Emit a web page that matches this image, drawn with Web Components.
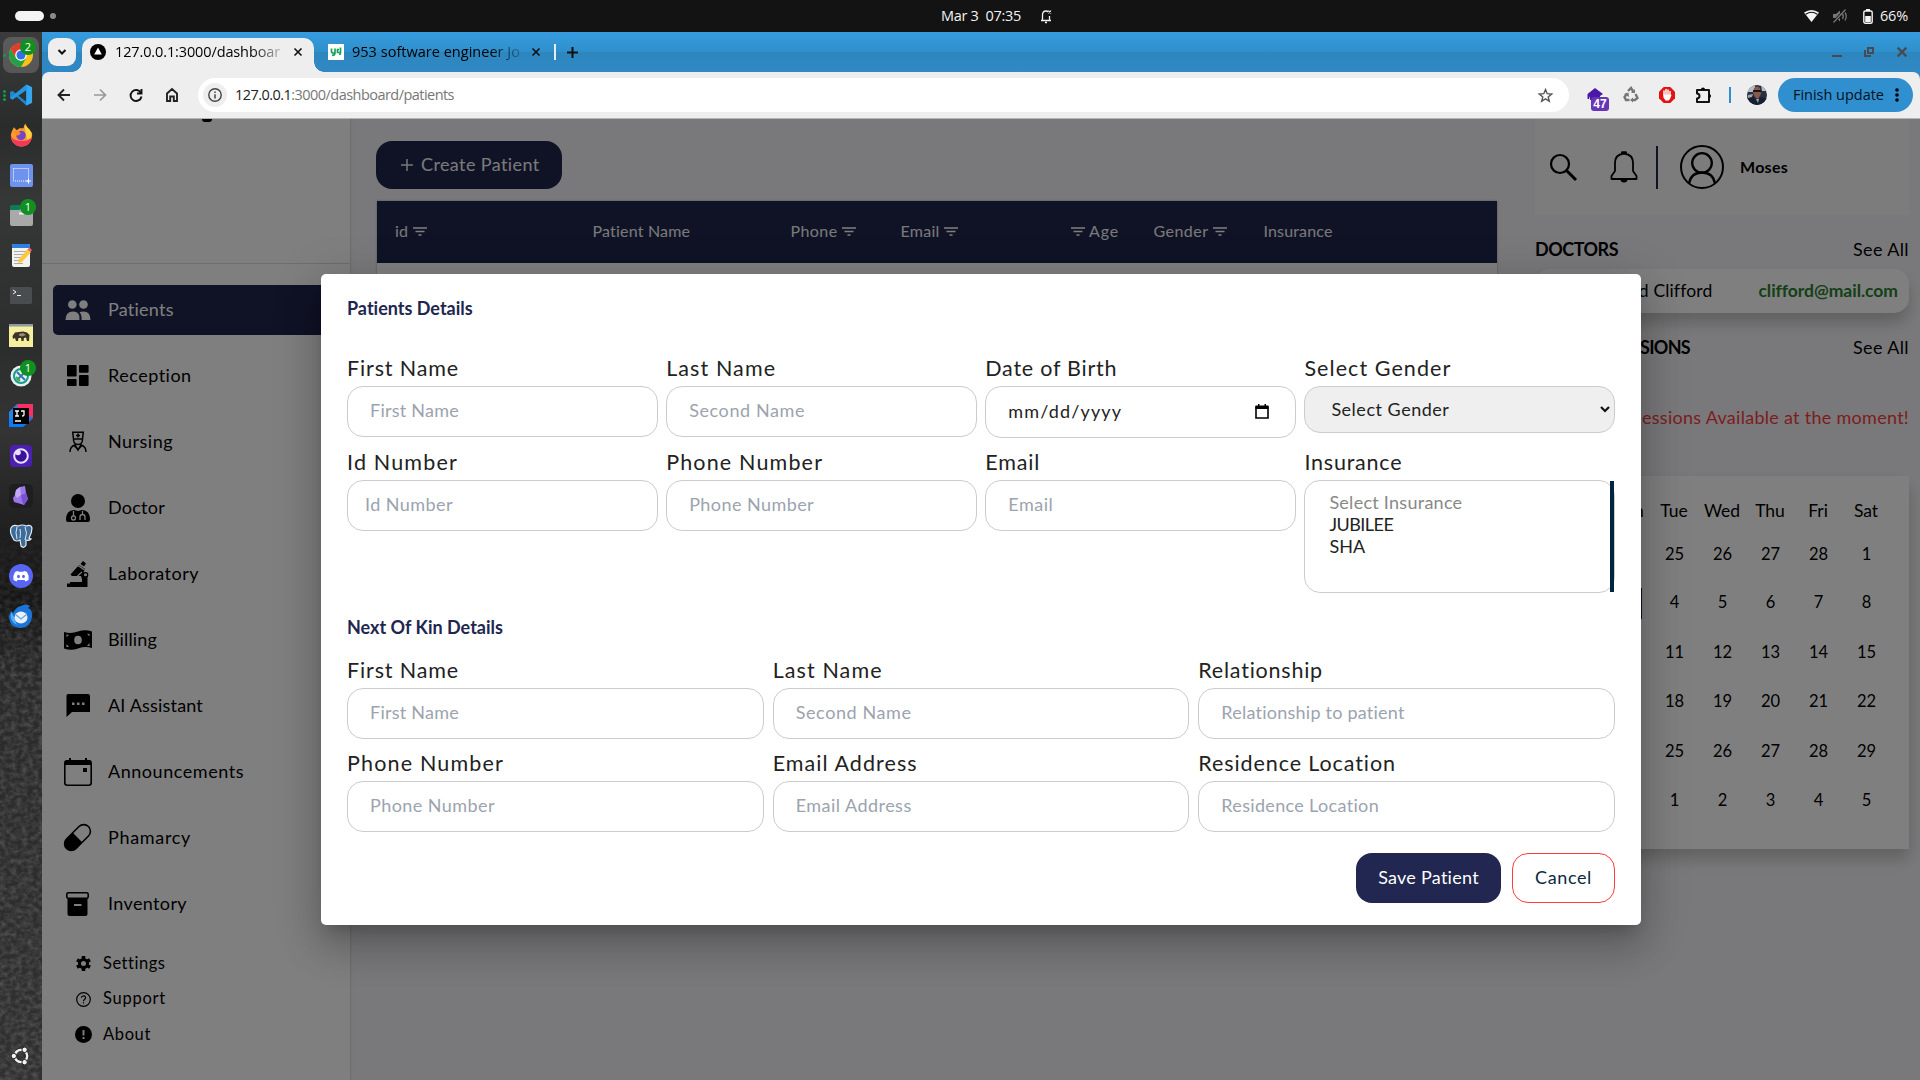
<!DOCTYPE html>
<html lang="en">
<head>
<meta charset="utf-8">
<title>Patients</title>
<style>
html,body{margin:0;height:100%;overflow:hidden;background:#131313}
body{font-family:Lato,"Open Sans",sans-serif;font-size:18px;color:#000}
</style>
</head>
<body>
<desktop-shell></desktop-shell>
<script>
const define = (name, css, html) => customElements.define(name, class extends HTMLElement {
  constructor() {
    super();
    this.attachShadow({ mode: 'open' });
  }
  connectedCallback() {
    const t = document.createElement('template');
    t.innerHTML = `<style>:host{display:block;box-sizing:border-box}*{box-sizing:border-box}svg{display:block;flex:none;overflow:visible}${css}</style>` + (typeof html === 'function' ? html(this) : html);
    this.shadowRoot.replaceChildren(t.content.cloneNode(true));
  }
});
const svg = (w, h, vb, body, extra = '') => `<svg width="${w}" height="${h}" viewBox="${vb}" ${extra}>${body}</svg>`;

/* ---------- dock ---------- */
const badge = n => `<span class="badge">${n}</span>`;
const dockIcons = [
  `<div class="cell on">${svg(24,24,'0 0 24 24','<circle cx="12" cy="12" r="12" fill="#fbc116"/><path d="M12 12 1.6 6A12 12 0 0 1 22.400 6Z" fill="#e33b2e"/><path d="M12 6H22.4A12 12 0 0 0 1.600 6L6.800 15Z" fill="#e33b2e"/><path d="M1.600 6 6.800 15 12 18 17.200 15 12 24A12 12 0 0 1 1.600 6Z" fill="#24a148"/><circle cx="12" cy="12" r="5.800" fill="#fff"/><circle cx="12" cy="12" r="4.500" fill="#2f72e2"/>')}${badge(2)}<i class="d1"></i></div>`,
  `<div class="cell">${svg(23,24,'0 0 24 24','<path d="M17 1 23 4V20L17 23 6.500 13.500 2.500 16.500 0 15.200V8.800L2.500 7.500 17 19Z" fill="#1b86d0"/><path d="M0 15.200 17 1V7L2.500 17Z" fill="#2796e0"/><path d="M17 1 23 4V20L17 23Z" fill="#35a7f0"/>')}<i class="d2"></i></div>`,
  `<div class="cell">${svg(23,24,'0 0 24 24','<path d="M2 8 4 4 7 7 10 5 14 5 16 0 19 6 23 10C24 18 19 24 12 24S0 18 1 11Z" fill="#ff9a2a"/><path d="M1 12C2 17 7 18 12 18S20 18 23 13C22 20 18 24 12 24S1 19 1 12Z" fill="#f5365c"/><path d="M15 1C20 6 24 8 22 15L18 17 16 8Z" fill="#ffd43b"/><circle cx="11.500" cy="12.500" r="5" fill="#7446c9"/><path d="M4 8 10 8 11 11 7 13Z" fill="#ff8a1e"/>')}</div>`,
  `<div class="cell">${svg(23,23,'0 0 23 23','<rect width="23" height="23" rx="2" fill="#6d92f0"/><rect x="3.500" y="4.500" width="15" height="12.500" fill="none" stroke="#fff" stroke-dasharray="1 1"/><path d="M18.500 14.500v5M16 17h5" stroke="#fff"/>')}</div>`,
  `<div class="cell">${svg(23,22,'0 0 23 22','<rect y="1" width="14" height="9" rx="2" fill="#0d7a5c"/><path d="M0 6 9 6 12 4H23V20Q23 22 21 22H2Q0 22 0 20Z" fill="#a9a9a9"/><path d="M9 8.500h5v2H9z" fill="#eee"/>')}${badge(1)}</div>`,
  `<div class="cell">${svg(22,23,'0 0 22 23','<rect x="2" width="18" height="23" rx="2" fill="#f2f2ee"/><path d="M2 4V2Q2 0 4 0H18Q20 0 20 2V4Z" fill="#2f7fe0"/><path d="M4 7.500h12M4 10.500h10M4 13.500h8M4 16.500h6M4 19.500h9" stroke="#aaa"/><path d="M8 19 9 15 18 5 21 8 12 18Z" fill="#ffc83a"/><path d="M17.500 5.500 19.500 3.500 22 6 20.500 8Z" fill="#ee5d62"/>')}</div>`,
  `<div class="cell">${svg(24,19,'0 0 24 19','<rect x=".5" y=".5" width="23" height="18" rx="2" fill="#4a4d50" stroke="#2e3032"/><path d="M4 4 7 6 4 8M8 9.500h4" fill="none" stroke="#eee"/>')}</div>`,
  `<div class="cell">${svg(24,23,'0 0 24 23','<rect width="24" height="23" fill="#f6ef9d"/><rect width="24" height="2.500" fill="#8c9aa6"/><path d="M3.500 12 6 8.500 10 8 14 7.500 18 8.500 20.500 11 20 17 18 17 17 13.500 15 14 14.500 17 12.500 17 12 14 9.500 14 9 17 7 17 6 14 4 15Z" fill="#3b3428"/><path d="M10 10 14 9 17 11 13 12.500 10 11.500Z" fill="#988c72"/>')}</div>`,
  `<div class="cell">${svg(22,22,'0 0 22 22','<circle cx="11" cy="11" r="10.500" fill="#e9eeee"/><circle cx="11" cy="11" r="7" fill="none" stroke="#189b8b" stroke-width="2"/><path d="M7 7 15 15M7 15 11 11 15 7" stroke="#3574b4" stroke-width="2"/><path d="M6 12l4 4" stroke="#32b34a" stroke-width="2"/>')}${badge(1)}</div>`,
  `<div class="cell">${svg(24,24,'0 0 24 24','<path d="M0 8 8 0 14 12 0 22Z" fill="#2b7fe8"/><path d="M8 0H24V14L18 20 10 10Z" fill="#fb2f68"/><path d="M0 16 0 23H14L20 18 24 13 10 12Z" fill="#087cfa"/><rect x="4" y="4" width="16" height="16"/><path d="M6 7h4M8 7v5M6 12h4M12 7h3v4q0 1-2 1M6 17h6" stroke="#fff" stroke-width="1.300" fill="none"/>')}</div>`,
  `<div class="cell">${svg(22,22,'0 0 22 22','<rect width="22" height="22" rx="4" fill="#4b1fb4"/><circle cx="11" cy="11" r="6.800" fill="#3a109c" stroke="#e8e2fb" stroke-width="2"/><circle cx="8" cy="7.500" r="2.800" fill="#e8e2fb"/>')}</div>`,
  `<div class="cell">${svg(24,24,'0 0 24 24','<rect width="24" height="24" rx="5" fill="#1e1e20"/><path d="M11 3 16 2 17 9 19 15 15 21 12 20 5 18 4 14 6 11 7 6Z" fill="#9b78ea"/><path d="M11 3 12 11 8 14 6 11 7 6Z" fill="#c3a8f6"/><path d="M12 11 17 9 19 15 15 21 13 17Z" fill="#7a50d4"/>')}</div>`,
  `<div class="cell">${svg(24,24,'0 0 24 24','<path d="M2 4Q4 0 9 2 14 0 17 2 22 0 23 4 23 9 20 14L22 15Q20 17 17 16V21Q15 25 12 22L11 16Q8 18 5 16 0 8 2 4Z" fill="#3c6d9a" stroke="#e6edf3" stroke-width="1.200"/><path d="M8 3Q6 8 8 15M16 3Q19 9 16 16M11 5Q12 9 11 14" fill="none" stroke="#dfe8ef"/>')}</div>`,
  `<div class="cell">${svg(24,24,'0 0 24 24','<circle cx="12" cy="12" r="12" fill="#5865f2"/><path d="M8.500 7 10 7.800H14L15.500 7 18 8Q20.500 12 19.500 16L16.500 17.500 15.500 16H8.500L7.500 17.500 4.500 16Q3.500 12 6 8Z" fill="#fff"/><ellipse cx="9.500" cy="12.500" rx="1.400" ry="1.700" fill="#5865f2"/><ellipse cx="14.500" cy="12.500" rx="1.400" ry="1.700" fill="#5865f2"/>')}</div>`,
  `<div class="cell">${svg(24,24,'0 0 24 24','<path d="M12 2Q17-1 21 2L19 4Q24 6 23 13 21 24 12 24 1 24 0 13L2 7 4 9Q7 3 12 2Z" fill="#1b74d8"/><path d="M2 8Q0 17 8 21L5 13Z" fill="#52b1f3"/><ellipse cx="12" cy="13.500" rx="6.500" ry="6" fill="#e9f1fb"/><path d="M6.500 10.500 12 15 17.500 10.500" fill="none" stroke="#6fa5dd" stroke-width="1.300"/>')}</div>`
];
define('app-dock', `
:host{width:42px;background:linear-gradient(#3b3b3b,#2a2c2c 9%,#363838 16%,#2c2d2d 30%,#343434 38%,#1e1e1e 48%,#161616 54%,#2a2a2a 62%,#303030);position:relative;overflow:hidden;display:flex;flex-direction:column;align-items:center}
.tex{position:absolute;left:0;top:0;opacity:.24;z-index:0;-webkit-mask:linear-gradient(transparent 480px,#000 620px)}
.cell{position:relative;width:42px;height:40.070px;flex:none;display:flex;align-items:center;justify-content:center}
.first{height:3px}
.on::before{content:"";position:absolute;left:3px;top:2px;width:36px;height:36px;border-radius:8px;background:#ffffff2b}
.cell svg{position:relative}
.badge{position:absolute;left:20px;top:4px;width:16px;height:16px;border-radius:50%;background:#109021;color:#fff;font:11px/16px "Open Sans",sans-serif;text-align:center}
i{position:absolute;left:3px;width:3px;height:3px;border-radius:50%;background:#109a56;top:19px}
.d2{box-shadow:0 -4px #109a56,0 4px #109a56}
.end{margin-top:auto;margin-bottom:14px;position:relative}
`, `${svg(42,1048,'0 0 42 1048','<filter id="n" x="0" y="0" width="100%" height="100%"><feTurbulence type="fractalNoise" baseFrequency=".18 .22" numOctaves="3" seed="4"/><feColorMatrix values="0 0 0 0 .55  0 0 0 0 .55  0 0 0 0 .55  1.800 0 0 0 -.6"/></filter><rect y="480" width="42" height="568" filter="url(#n)"/>','class="tex"')}
<div class="first"></div>${dockIcons.join('')}<div class="end">${svg(20,20,'0 0 20 20','<circle cx="10" cy="10" r="6.200" fill="none" stroke="#f4f4f4" stroke-width="2.200"/><g fill="#f4f4f4" stroke="#222" stroke-width="1"><circle cx="2.800" cy="10" r="2.700"/><circle cx="13.600" cy="3.800" r="2.700"/><circle cx="13.600" cy="16.200" r="2.700"/></g>')}</div>`);

/* ---------- system bar ---------- */
define('system-bar', `
:host{height:32px;background:#131313;color:#f2f2f2;display:grid;grid-template-columns:1fr auto 1fr;align-items:center;font:14.500px "Open Sans","Noto Sans",sans-serif}
.l{display:flex;align-items:center;gap:6px;padding-left:15px}.l b{width:29px;height:10px;border-radius:5px;background:#f4f4f4}.l i{width:6px;height:6px;border-radius:50%;background:#8b8b8b}
.c{display:flex;align-items:center;width:114px;gap:19px;margin-left:76px}
.r{display:flex;justify-content:flex-end;align-items:center;padding-right:12px}
`, `<div class="l"><b></b><i></i></div>
<div class="c"><fit-text w="80">Mar 3&nbsp; 07:35</fit-text>${svg(12,15,'0 0 12 15','<path d="M1 11.500h10M2.500 11V6Q2.500 2 6 2q1.500 0 2.500 1M9.500 7v4M5 13.500h2" stroke="#f2f2f2" stroke-width="1.300" fill="none"/><path d="M8.500 1.500 11 4.500M11 1.500 8.500 4.500" stroke="#f2f2f2" stroke-width="1.100"/>')}</div>
<div class="r">${svg(15,12,'0 0 15 12','<path d="M0 2.500Q7.500-2.500 15 2.500L7.500 12Z" fill="#f4f4f4"/><path d="M1.700 4.200Q7.500.2 13.300 4.200" stroke="#131313" fill="none" stroke-width="1.100"/>')}
${svg(14,14,'0 0 14 14','<path d="M0 5H3L7 1.500V12.500L3 9H0Z" fill="#777"/><path d="M.5 13.500 12.500.5" stroke="#131313" stroke-width="3"/><path d="M.5 13.500 12.500.5M9.500 5Q11 7 9.500 10M12 3.500Q14.500 7 12 11.500" fill="none" stroke="#777" stroke-width="1.300"/>','style="margin:0 16px 0 14px"')}
${svg(10,15,'0 0 10 15','<rect x=".8" y="2" width="8.400" height="12.200" rx="1.500" fill="none" stroke="#f4f4f4" stroke-width="1.400"/><path d="M3 0h4v2H3zM2.200 7h5.600v6H2.200z" fill="#f4f4f4"/>','style="margin-right:7px"')}<fit-text w="28">66%</fit-text></div>`);

/* ---------- browser chrome ---------- */
const X = (c, s = 8, w = 1.6) => svg(s, s, '0 0 8 8', `<path d="M.5.5 7.500 7.500M7.500.5.5 7.500" stroke="${c}" stroke-width="${w}"/>`);
define('tab-strip', `
:host{height:40px;background:linear-gradient(#369cdf,#2f8fcb 50%,#2e86bf 50%,#3089c4);display:flex;align-items:flex-start;padding:6px 0 0 6px;font:14.500px "Open Sans",sans-serif}
.dd{width:28px;height:28px;border-radius:9px;background:#eee;display:flex;align-items:center;justify-content:center;margin-right:6px}
.tab{width:232px;height:34px;background:#eee;border-radius:10px 10px 0 0;display:flex;align-items:center;padding:0 12px 6px 8px;position:relative}
.tab::before,.tab::after{content:"";position:absolute;bottom:0;width:10px;height:10px;left:-10px;background:radial-gradient(circle at 0 0,transparent 9.500px,#eee 10px)}
.tab::after{left:auto;right:-10px;background:radial-gradient(circle at 100% 0,transparent 9.500px,#eee 10px)}
.tx{margin:0 0 0 9px;-webkit-mask:linear-gradient(90deg,#000 82%,#0003 100%)}
.t2{height:28px;display:flex;align-items:center;padding-left:14px}
.win{margin-left:auto;display:flex;align-items:center;height:28px;padding-right:13px}
`, `<div class="dd">${svg(8,6,'0 0 8 6','<path d="M.5 1 4 4.500 7.500 1" fill="none" stroke="#111" stroke-width="2"/>')}</div>
<div class="tab">${svg(16,16,'0 0 16 16','<circle cx="8" cy="8" r="8"/><path d="M8 3.500 11.800 10.500H4.200Z" fill="#fff"/>')}<div class="tx" style="width:166px"><fit-text w="165">127.0.0.1:3000/dashboar</fit-text></div><span style="margin-left:auto">${X('#111')}</span></div>
<div class="t2">${svg(16,16,'0 0 16 16','<rect width="16" height="16" fill="#fff"/><path d="M3.500 4.500v3q0 1.500 2 1.500h1.500M7 4.500v4q0 3-3 3M9 5.500h2M12.500 3.500v5.500q0 1.500-1.500 1.500M9.500 5v3.500h2" fill="none" stroke="#13a25a" stroke-width="1.700"/>')}<div class="tx" style="width:169px;margin-left:8px"><fit-text w="168">953 software engineer Jo</fit-text></div><span style="margin-left:11px">${X('#111')}</span><i style="width:2px;height:16px;background:#e5eef5;margin:0 11px 0 14px"></i>${svg(11,11,'0 0 11 11','<path d="M5.500 0V11M0 5.500H11" stroke="#111" stroke-width="2"/>')}</div>
<div class="win">${svg(10,10,'0 0 10 10','<path d="M0 9h10" stroke="#454b50" stroke-width="2"/>')}<span style="margin:0 23px 0 22px">${svg(10,10,'0 0 10 10','<path d="M1 3V9H7M4 1H9V6H4Z" fill="none" stroke="#454b50" stroke-width="2"/>')}</span>${X('#454b50',10,1.7)}</div>`);

define('tool-bar', `
:host{height:47px;background:#eee;border-bottom:1px solid #b3b5b5;border-radius:7px 7px 0 0;display:flex;align-items:center;padding-left:14px;font:14.500px "Open Sans",sans-serif;color:#222}
.nav{display:flex;gap:20px;width:142px;align-items:center}
.url{width:1371px;height:34px;border-radius:17px;background:#fff;display:flex;align-items:center;padding:0 16px 0 5px;gap:8px}
.inf{width:24px;height:24px;border-radius:50%;background:#eee;display:grid;place-items:center}
.url em{font-style:normal;color:#777}
.star{margin-left:auto}
.ext{display:flex;align-items:center;height:100%;padding-left:18px}
.hat{position:relative}
.hat b{position:absolute;left:4px;top:9px;width:18px;height:14px;border-radius:3px;background:#6635b8;color:#fff;font:bold 12px/14px "Liberation Sans",sans-serif;text-align:center}
.fin{width:135px;height:34px;border-radius:17px;background:#2f8fcf;display:flex;align-items:center;padding-left:15px;margin-left:11px;gap:11px;color:#07121b}
`, `<div class="nav">${[
 '<path d="M14 8H3M8 2.500 2.500 8 8 13.500" fill="none" stroke="#222" stroke-width="1.900"/>',
 '<path d="M2 8H13M8 2.500 13.500 8 8 13.500" fill="none" stroke="#999" stroke-width="1.700"/>',
 '<path d="M13 6A5.500 5.500 0 1 0 13.500 9.500M13.500 2V6.500H9" fill="none" stroke="#111" stroke-width="1.900"/>',
 '<path d="M3 14V6.500L8 2 13 6.500V14H9.800V9.500H6.200V14Z" fill="none" stroke="#222" stroke-width="1.900"/>'].map(p => svg(16,16,'0 0 16 16',p)).join('')}</div>
<div class="url"><div class="inf">${svg(14,14,'0 0 14 14','<circle cx="7" cy="7" r="6.200" fill="none" stroke="#444" stroke-width="1.400"/><path d="M7 6.200V10.500M7 3.500V5" stroke="#444" stroke-width="1.500"/>')}</div><fit-text w="219">127.0.0.1<em>:3000/dashboard/patients</em></fit-text>
<span class="star">${svg(15,15,'0 0 15 15','<path d="M7.500 1.500 9.200 5.700 13.700 6 10.200 8.900 11.300 13.300 7.500 10.900 3.700 13.300 4.800 8.900 1.300 6 5.800 5.700Z" fill="none" stroke="#555" stroke-width="1.400"/>')}</span></div>
<div class="ext"><span class="hat">${svg(16,14,'0 0 16 14','<path d="M8 0 16 6 13 8V12H3V8L2 11H.5V6Z" fill="#4a17a8"/>')}<b>47</b></span>
<span style="margin-left:20px">${svg(16,16,'0 0 16 16','<path d="M5 4 8 1 10.500 5M12.500 7 14.500 11 12 13H9M6.500 13H3L1.500 10 4 6.500" fill="none" stroke="#777" stroke-width="2.400"/><path d="M8 6h4V2ZM10 10.500V15.500L7 13ZM1 7 5.500 5.500 6 10Z" fill="#777"/>')}</span>
<span style="margin-left:20px">${svg(16,16,'0 0 16 16','<path d="M4.700 0H11.300L16 4.700V11.300L11.300 16H4.700L0 11.300V4.700Z" fill="#e61212"/><path d="M5 8V4M7 7.500V2.500M9 7.500V3M11 8V4.500" stroke="#fff" stroke-width="1.500" stroke-linecap="round"/><path d="M4.300 7.500H11.800L12.500 8 11 12 9.500 13.500H6.500L4.500 10.500Z" fill="#fff"/>')}</span>
<span style="margin-left:20px">${svg(17,17,'0 0 17 17','<path d="M2 3H14V7 11V15H2V11.500A2.500 2.500 0 0 0 2 6.500Z" fill="none" stroke="#111" stroke-width="2" stroke-linejoin="round"/><path d="M6 2.500A2 2 0 0 1 10 2.500ZM14 7A2 2 0 0 1 14 11Z"/>')}</span>
<i style="width:2px;height:16px;background:#2f8fcf;margin:0 16px 0 17px"></i>
${svg(20,20,'0 0 20 20','<clipPath id="c"><circle cx="10" cy="10" r="10"/></clipPath><g clip-path="url(#c)"><path d="M0 0h20v20H0z" fill="#27303f"/><path d="M0 0H8V7H0zM14 0h6v6h-5z" fill="#b9bec6"/><path d="M7 3Q10 0 13 3L14 9 11 14 8 12 6 8Z" fill="#8a5a48"/><path d="M6 5h8v2H6z" fill="#17171c"/><path d="M0 12 6 11 10 16 14 12 20 14V20H0Z" fill="#18202f"/><path d="M1 10 6 9 5 12 1 13ZM9 14l3 0-1 4Z" fill="#9aa3b1"/></g>')}
<div class="fin"><fit-text w="91">Finish update</fit-text>${svg(4,14,'0 0 4 14','<circle cx="2" cy="2" r="1.800"/><circle cx="2" cy="7" r="1.800"/><circle cx="2" cy="12" r="1.800"/>')}</div></div>`);

/* ---------- sidebar ---------- */
const icons = {
  patients: svg(26,20,'0 0 26 20','<circle cx="7.300" cy="4.500" r="4.300"/><circle cx="18.500" cy="4.500" r="4.300"/><path d="M.5 20Q.5 11.500 8 11.500T14.500 20ZM14.500 12Q25.500 9.500 25.500 20H16.500Q17 15 14.500 12Z"/>'),
  reception: svg(22,21,'0 0 22 21','<rect x="0" width="9.600" height="11.500" rx="1"/><rect x="12" width="9.600" height="7.700" rx="1"/><rect y="14" width="9.600" height="7" rx="1"/><rect x="12" y="10" width="9.600" height="11" rx="1"/>'),
  nursing: svg(18,21,'0 0 18 21','<path d="M4.500 8 3.700 1.200H14.300L13.500 8ZM4.500 8V9Q5 13.500 9 13.500T13.500 9V8M1 21Q1 15.500 6 14L9 19 12 14Q17 15.500 17 21M5.500 15 9 18.500 12.500 15" fill="none" stroke="#000" stroke-width="1.500"/><path d="M9 2.500v4M7 4.500h4" stroke="#000" stroke-width="1.500"/>'),
  doctor: svg(24,28,'0 0 24 28','<circle cx="12" cy="7" r="7"/><path d="M0 26Q0 16 8 16L12 17 16 16Q24 16 24 26 24 28 22 28H2Q0 28 0 26Z"/><path d="M7.500 17V22M16.500 17V20.500M14 26V23Q14 20.500 16.500 20.500T19 23V26" fill="none" stroke="#fff" stroke-width="1.300"/><circle cx="7.500" cy="24" r="2" fill="none" stroke="#fff" stroke-width="1.300"/>'),
  laboratory: svg(22,26,'0 0 22 26','<path d="M0 26V22.500H3V21H15V18L14 15 5 15 3.500 13.500 12 4 18 8 16.500 11Q20 12 20.500 15V26Z"/><path d="M13.500 3 16 0 19 2.500 17 5.500Z"/><path d="M11 4.500 17.500 9M3 18H13.500M10.500 15 15 11" stroke="#fff" stroke-width="1.200"/><circle cx="18.500" cy="13.800" r="2.200" fill="#fff" stroke="#000" stroke-width="1.300"/>'),
  billing: svg(28,20,'0 0 28 20','<path d="M0 2Q7 4 14 1.500T28 1.500V18Q21 16 14 18.500T0 18.500Z"/><ellipse cx="14" cy="10" rx="3.800" ry="4.300" fill="#fff"/><path d="M2.500 7V4.500L5 5ZM25.500 4V6.500L23 3.700ZM2.500 14V17H5ZM25.500 13V16H23Z" fill="#fff"/>'),
  ai: svg(24,24,'0 0 24 24','<path d="M2 0H22Q24 0 24 2V18H6L.5 23V2Q.5 0 2 0Z"/><path d="M6 8.500h2.500v2.500H6zM11 8.500h2.500v2.500H11zM16 8.500h2.500v2.500H16z" fill="#fff"/>'),
  announcements: svg(28,28,'0 0 28 28','<rect x=".8" y="2.800" width="26.400" height="24.400" rx="2.500" fill="none" stroke="#000" stroke-width="1.600"/><path d="M1 7V4Q1 2 3 2H25Q27 2 27 4V7ZM5 0h2v3H5zM21 0h2v3h-2zM19 10h4v4h-4z"/>'),
  phamarcy: svg(27,27,'0 0 27 27','<g transform="rotate(-45 13.500 13.500)"><rect x="-2" y="6.800" width="31" height="13.400" rx="6.700" fill="none" stroke="#000" stroke-width="1.600"/><path d="M13.500 6.500H5A7 7 0 0 0 5 20.500H13.500Z"/></g>'),
  inventory: svg(23,24,'0 0 23 24','<rect x=".8" y=".8" width="21.400" height="5.400" rx="1.500" fill="none" stroke="#000" stroke-width="1.600"/><path d="M1.500 6H21.500V22Q21.500 24 19.500 24H3.500Q1.500 24 1.500 22Z"/><path d="M8 12h7.500v2H8z" fill="#fff"/>'),
  settings: svg(15,15,'0 0 15 15','<circle cx="7.500" cy="7.500" r="4" fill="none" stroke="#000" stroke-width="3"/><path d="M7.500 0V3M7.500 12V15M1 3.800 3.500 5.200M11.500 9.800 14 11.200M1 11.200 3.500 9.800M11.500 5.200 14 3.800" stroke="#000" stroke-width="3.600"/>'),
  support: svg(15,15,'0 0 15 15','<circle cx="7.500" cy="7.500" r="6.800" fill="none" stroke="#000" stroke-width="1.200"/><path d="M5.300 5.800Q5.500 3.800 7.500 3.800T9.600 5.700C9.600 7.200 7.500 7.300 7.500 9.200M7.500 10.200V11.500" fill="none" stroke="#000" stroke-width="1.200"/>'),
  about: svg(17,17,'0 0 17 17','<circle cx="8.500" cy="8.500" r="8.500"/><path d="M8.500 4V9.500M8.500 11V13" stroke="#fff" stroke-width="1.900"/>')
};
define('nav-item', `
:host{height:66px;display:flex;align-items:center}
.row{height:50px;flex:1;border-radius:5px;display:flex;align-items:center;padding-left:10px;gap:16px}
.ic{width:29px;display:grid;place-items:center}
:host([active]) .row{background:#20244d;color:#fff}:host([active]) svg{fill:#fff}
:host([small]){height:35.500px;font-size:16.500px}:host([small]) .row{padding-left:16px;gap:5px}
`, el => `<div class="row"><span class="ic">${icons[el.getAttribute('icon')]}</span><fit-text w="${el.getAttribute('w')}">${el.getAttribute('label')}</fit-text></div>`);
const nav = [['patients','Patients',66,'active'],['reception','Reception',84],['nursing','Nursing',65],['doctor','Doctor',57],['laboratory','Laboratory',91],['billing','Billing',49],['ai','AI Assistant',95],['announcements','Announcements',136],['phamarcy','Phamarcy',83],['inventory','Inventory',79],['settings','Settings',62,'small'],['support','Support',63,'small'],['about','About',48,'small']];
define('side-nav', `
:host{width:308px;background:#fff;box-shadow:0 0 3px #0003;position:relative;display:flex;flex-direction:column}
.logo{height:145px;border-bottom:1px solid #ddd;margin-bottom:12.500px;display:flex;padding-left:160px}
.logo i{width:10px;height:3px;background:#000;border-radius:0 0 6px 6px}
nav{padding:0 11px;display:flex;flex-direction:column}
nav nav-item[icon=settings]{margin-top:9.500px}
`, `<div class="logo"><i></i></div><nav>${nav.map(n => `<nav-item icon="${n[0]}" label="${n[1]}" w="${n[2]}" ${n[3] || ''}></nav-item>`).join('')}</nav>`);

/* ---------- main column ---------- */
const filt = svg(14,9,'0 0 14 9','<path d="M0 1H14M2.500 4.500H11.500M5.500 8H8.500" stroke="#fff" stroke-width="1.500"/>');
define('patient-table', `
:host{width:1120px;background:#fff;height:400px;box-shadow:0 0 2px #0005}
.h{height:62px;background:#20244d;color:#f2f2f2;font-size:16px;display:grid;grid-template-columns:197.500px 198px 110px 170px 83px 110px 1fr;align-items:center;padding:0 0 2px 18px}
.h span{display:flex;align-items:center;gap:4.500px}
`, `<div class="h"><span><fit-text w="13">id</fit-text>${filt}</span><span><fit-text w="98">Patient Name</fit-text></span><span><fit-text w="47">Phone</fit-text>${filt}</span><span><fit-text w="39">Email</fit-text>${filt}</span><span>${filt}<fit-text w="30">Age</fit-text></span><span><fit-text w="55">Gender</fit-text>${filt}</span><span><fit-text w="69">Insurance</fit-text></span></div>`);
define('main-view', `
:host{flex:1;padding:22px 0 0 26px;display:flex;flex-direction:column;align-items:flex-start}
.btn{width:186px;height:48px;border-radius:16px;background:#20244d;color:#f5f5f5;display:flex;align-items:center;padding-left:25px;gap:8px;margin-bottom:12px}
patient-table{margin-left:1px}
`, `<div class="btn">${svg(12,12,'0 0 12 12','<path d="M6 0V12M0 6H12" stroke="#eee" stroke-width="1.500"/>')}<fit-text w="119">Create Patient</fit-text></div><patient-table></patient-table>`);

/* ---------- right panel ---------- */
define('mini-calendar', `
:host{height:373px;background:#fff;box-shadow:0 10px 15px #0003;display:grid;grid-template-columns:repeat(7,48px);grid-template-rows:47px 39px 58px 41px 57.500px 42px 57px;justify-content:end;padding:12px 19px 0 0;align-items:center;justify-items:center;font-size:16.500px}
span{padding:0 0 2px 1px}.h{font-size:17.500px;padding-left:0}
.sel{background:#20244d;color:#fff;width:32px;height:31px;display:grid;place-items:center}
`, (() => {
  const rows = [['Sun','Mon','Tue','Wed','Thu','Fri','Sat'],[23,24,25,26,27,28,1],[2,3,4,5,6,7,8],[9,10,11,12,13,14,15],[16,17,18,19,20,21,22],[23,24,25,26,27,28,29],[30,31,1,2,3,4,5]];
  return rows.map((r, i) => r.map((d, j) => `<span class="${i ? '' : 'h'} ${i === 2 && j === 1 ? 'sel' : ''}">${j === 0 || (j === 1 && i) ? '' : d}</span>`).join('')).join('');
})());
define('right-panel', `
:host{width:374px;margin-right:11px;display:flex;flex-direction:column}
.top{height:96px;background:#f8f8f8;display:flex;align-items:center;padding-left:15px}
.hd{display:flex;justify-content:space-between;align-items:center;height:30px}
b{font-weight:700}
.doc{height:44px;border-radius:15px;background:#fff;box-shadow:0 10px 15px #0003;display:flex;align-items:center;justify-content:flex-end;padding-right:11px;gap:46px}
.doc b{color:#2a8030}
.none{height:32px;display:flex;align-items:center;justify-content:flex-end;color:#f83c3c;margin:39px 0 42px}
`, `<div class="top">${svg(27,27,'0 0 27 27','<circle cx="10" cy="10" r="9" fill="none" stroke="#000" stroke-width="2.200"/><path d="M16.500 16.500 26 26" stroke="#000" stroke-width="3"/>')}
${svg(28,32,'0 0 28 32','<path d="M14 2.500Q5 3.500 5 12V20L1.500 25V28H26.500V25L23 20V12Q23 3.500 14 2.500ZM12 3V1.200H16V3" fill="none" stroke="#000" stroke-width="1.800" stroke-linejoin="round"/><path d="M10.500 29H17.500Q17 31.500 14 31.500T10.500 29Z"/>','style="margin:0 18px 0 33px"')}
<i style="width:2px;height:43px;background:#20244d;margin-right:22px"></i>
${svg(44,44,'0 0 44 44','<circle cx="22" cy="22" r="21" fill="none" stroke="#000" stroke-width="2"/><circle cx="22" cy="18" r="9.800" fill="none" stroke="#000" stroke-width="2.300"/><path d="M9 38.500Q11 27.500 22 27.500T35 38.500" fill="none" stroke="#000" stroke-width="2.300"/>')}
<b style="margin-left:16px;font-size:16px"><fit-text w="48">Moses</fit-text></b></div>
<div class="hd" style="margin-top:20px;margin-bottom:4px"><b><fit-text w="83">DOCTORS</fit-text></b><fit-text w="56">See All</fit-text></div>
<div class="doc"><span style="font-size:17.500px"><fit-text w="73">d Clifford</fit-text></span><b style="font-size:17.500px"><fit-text w="139">clifford@mail.com</fit-text></b></div>
<div class="hd" style="margin-top:20px"><b style="margin-left:105px"><fit-text w="50">SIONS</fit-text></b><fit-text w="56">See All</fit-text></div>
<div class="none"><fit-text w="267">essions Available at the moment!</fit-text></div>
<mini-calendar></mini-calendar>`);

/* ---------- dialog ---------- */
define('form-field', `
:host{display:flex;flex-direction:column;gap:2px;color:#222}
.lab{height:30px;display:flex;align-items:center;font-size:21.500px;flex:none}
.in{height:50.500px;flex:none;border:1px solid #ccc;border-radius:16px;background:#fff;display:flex;align-items:center;padding-left:22px;color:#9ca3af}
:host([kind=id]) .in{padding-left:17px}
:host([kind=date]) .in{height:52px;color:#222;padding-right:26px;justify-content:space-between}
:host([kind=select]) .in{height:47px;background:#efefef;color:#222;padding-left:26px;padding-right:4px;justify-content:space-between}
:host([kind=list]) .in{height:113px;color:#222;padding:11px 0 0 24px;flex-direction:column;align-items:flex-start;position:relative}
.in i{position:absolute;right:0;top:0;width:4px;height:111px;background:#00253c}
.o{height:22px;display:flex;align-items:center}
.g{color:#888}
`, el => {
  const a = n => el.getAttribute(n), k = a('kind');
  const body = k === 'list' ? '<span class="o g"><fit-text w="133">Select Insurance</fit-text></span><span class="o"><fit-text w="64">JUBILEE</fit-text></span><span class="o"><fit-text w="36">SHA</fit-text></span><i></i>'
    : `<fit-text w="${a('pw')}">${a('ph')}</fit-text>` + (k === 'date' ? svg(14,15,'0 0 14 15','<path d="M1 3H13V14H1Z" fill="none" stroke="#000" stroke-width="1.600"/><path d="M.5 1.500h13V5H.5zM3 0h1.500v2H3zM9.500 0H11v2H9.500z"/>','style="margin-bottom:2px"') : k === 'select' ? svg(10,7,'0 0 10 7','<path d="M1 1 5 5 9 1" fill="none" stroke="#111" stroke-width="2.200"/>') : '');
  return `<div class="lab"><fit-text w="${a('lw')}">${a('label')}</fit-text></div><div class="in">${body}</div>`;
});
const field = (l, lw, p, pw, k = '') => `<form-field label="${l}" lw="${lw}" ph="${p}" pw="${pw}" kind="${k}"></form-field>`;
define('patient-dialog', `
:host{width:1320px;height:651px;background:#fff;border-radius:5px;padding:23px 26px 22px 26px;box-shadow:0 11px 15px -7px #0003,0 24px 38px 3px #00000024,0 9px 46px 8px #0000001f;display:flex;flex-direction:column}
h3{margin:0;height:24px;flex:none;display:flex;align-items:center;font-size:18px;font-weight:700;color:#21264f}
.g4{display:grid;grid-template-columns:repeat(4,1fr);column-gap:8.500px;grid-auto-rows:94px;height:239px;flex:none;margin-top:33px}
.g3{display:grid;grid-template-columns:repeat(3,1fr);column-gap:9px;grid-auto-rows:93px;flex:none;margin-top:16px}
.act{display:flex;justify-content:flex-end;gap:11px;margin-top:auto}
.act div{height:50px;border-radius:16px;display:grid;place-items:center}
.s{width:145px;background:#212750;color:#fff}.c{width:103px;border:1px solid #ff3b3b;color:#0a2a40}
`, `<h3><fit-text w="126">Patients Details</fit-text></h3><div class="g4">${field('First Name',112,'First Name',89)}${field('Last Name',110,'Second Name',116)}${field('Date of Birth',132,'mm/dd/yyyy',114,'date')}${field('Select Gender',147,'Select Gender',118,'select')}${field('Id Number',111,'Id Number',88,'id')}${field('Phone Number',157,'Phone Number',125)}${field('Email',55,'Email',45)}${field('Insurance',98,'','','list')}</div>
<h3 style="margin-top:23px"><fit-text w="156">Next Of Kin Details</fit-text></h3>
<div class="g3">${field('First Name',112,'First Name',89)}${field('Last Name',110,'Second Name',116)}${field('Relationship',125,'Relationship to patient',184)}${field('Phone Number',157,'Phone Number',125)}${field('Email Address',145,'Email Address',116)}${field('Residence Location',198,'Residence Location',158)}</div>
<div class="act"><div class="s"><fit-text w="101">Save Patient</fit-text></div><div class="c"><fit-text w="57">Cancel</fit-text></div></div>`);

define('clinic-page', `
:host{height:961px;background:#f3f3f6;position:relative;display:flex;overflow:hidden}
.ov{position:absolute;inset:0;background:#00000080;display:flex;padding:155px 0 0 279px}
`, `<side-nav></side-nav><main-view></main-view><right-panel></right-panel><div class="ov"><patient-dialog></patient-dialog></div>`);
define('browser-window', `:host{flex:1;background:#3089c4}`, `<tab-strip></tab-strip><tool-bar></tool-bar><clinic-page></clinic-page>`);
define('desktop-shell', `:host{width:1920px;height:1080px;overflow:hidden}.b{display:flex;height:1048px}`, `<system-bar></system-bar><div class="b"><app-dock></app-dock><browser-window></browser-window></div>`);

/* One-line text that spreads its letters to fill the width given in px. */
customElements.define('fit-text', class extends HTMLElement {
  connectedCallback() {
    if (this.shadowRoot) return;
    this.attachShadow({ mode: 'open' }).innerHTML = '<style>:host{display:inline-block;white-space:nowrap;flex:none;padding-bottom:2px}</style><slot></slot>';
    const w = parseFloat(this.getAttribute('w')), n = this.textContent.length;
    if (w && n) this.style.letterSpacing = ((w - this.getBoundingClientRect().width) / n).toFixed(3) + 'px';
  }
});
</script>
</body>
</html>
